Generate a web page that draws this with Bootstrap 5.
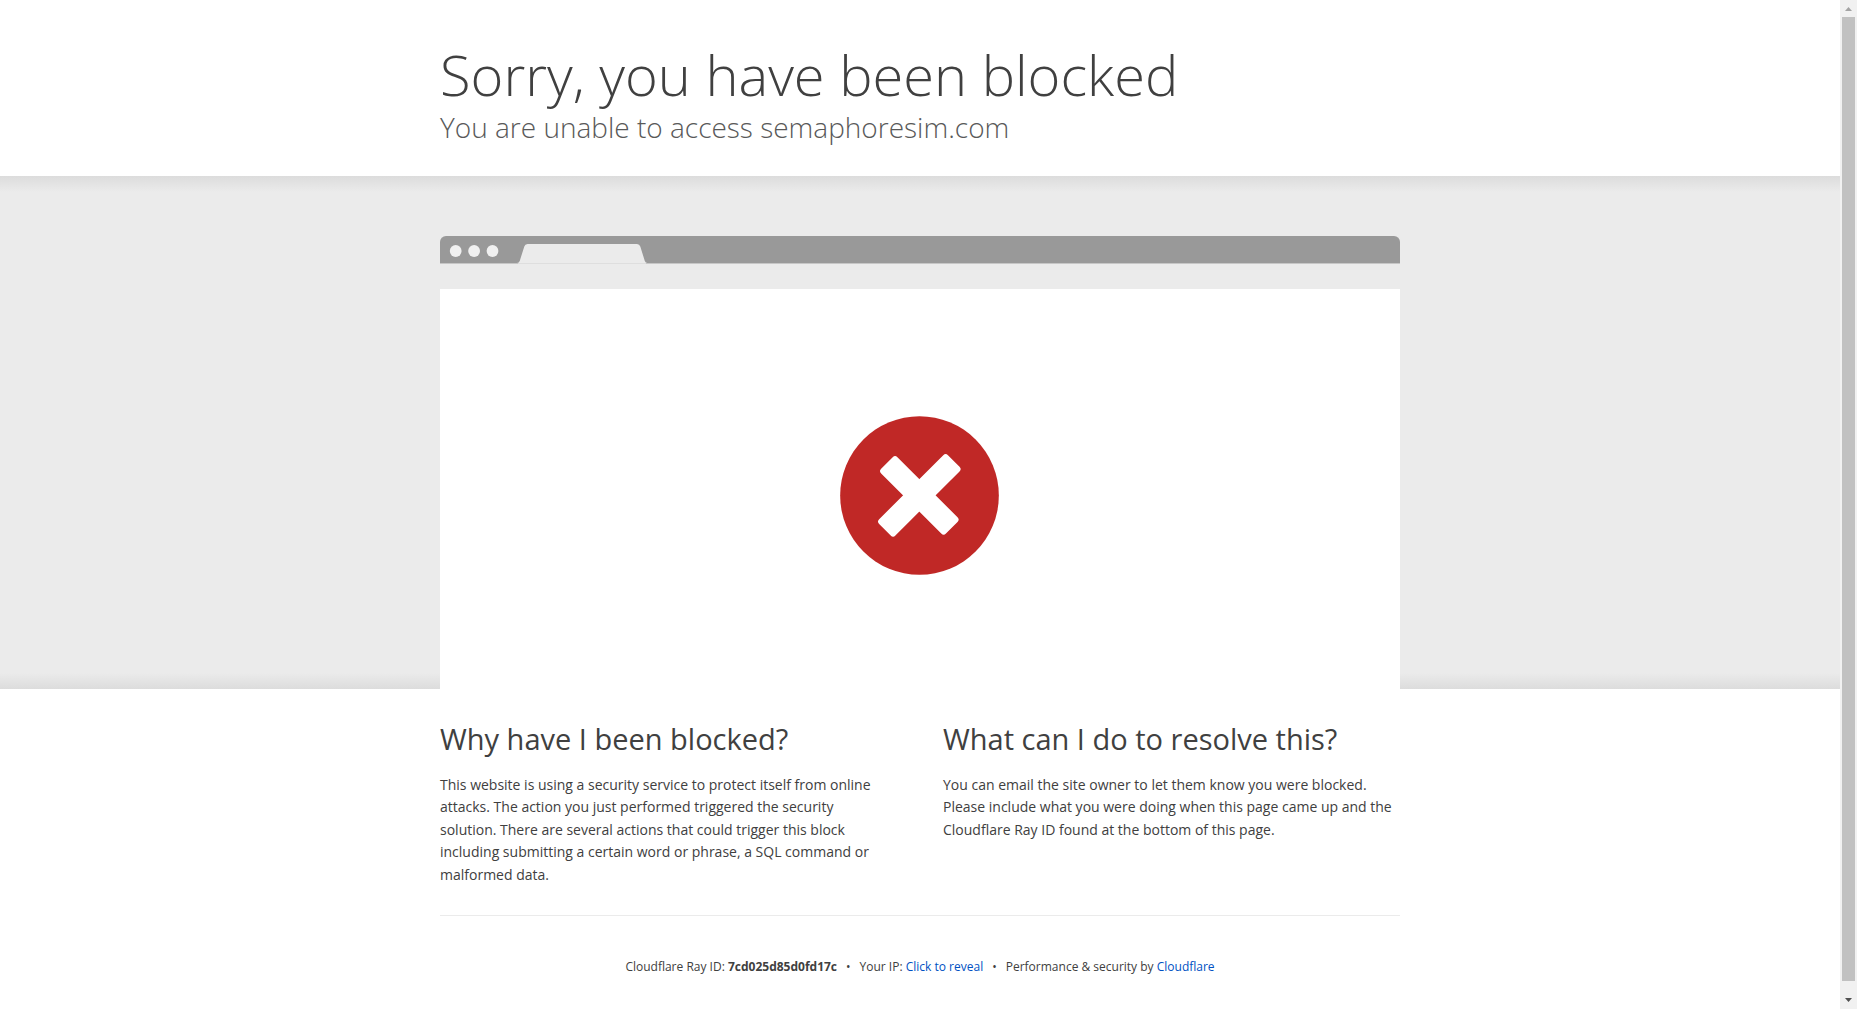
<!DOCTYPE html>
<html lang="en">
<head>
<meta charset="utf-8">
<meta name="viewport" content="width=device-width, initial-scale=1">
<title>Attention Required! | Cloudflare</title>
<link rel="stylesheet" href="https://cdn.jsdelivr.net/npm/bootstrap@5.3.0/dist/css/bootstrap.min.css">
<style>
  body { font-family: "Open Sans", "Noto Sans", sans-serif; font-size: 14px; line-height: 1.6; color: #404040; background: #fff; }
  .wrapper-960 { width: 100%; max-width: 960px; margin: 0 auto; }
  .page-head { padding: 39px 0 31px; }
  .page-head h1 { font-size: 56px; line-height: 70px; font-weight: 300; }
  .page-head h2 { font-size: 28px; line-height: 36px; font-weight: 300; color: #595959; }
  .stage {
    padding-top: 60px;
    background:
      linear-gradient(to bottom, #dcdcdc, #ebebeb) top / 100% 16px no-repeat,
      linear-gradient(to top, #dcdcdc, #ebebeb) bottom / 100% 16px no-repeat,
      #ebebeb;
  }
  .window-bar {
    background: linear-gradient(#c6c6c6, #c6c6c6) bottom / 100% 1px no-repeat, #999;
    border-radius: 6px 6px 0 0;
    margin-bottom: 25px;
  }
  .window-body { height: 400px; padding-top: 12px; background: #fff; }
  .reasons { --bs-gutter-x: 46px; padding: 32px 0 29px; }
  .reasons h2 { font-size: 29px; line-height: 36px; font-weight: 400; margin-bottom: 17px; }
  .page-foot { border-top: 1px solid #ebebeb; padding: 42px 0 32px; font-size: 12px; line-height: 18px; column-gap: 9px; }
  .page-foot a, .page-foot .btn { color: #0051c3; font-size: 12px; line-height: 18px; text-decoration: none; }
  .page-foot strong { font-weight: 700; }
  .scroll-rail { width: 17px; height: 100vh; background: #f1f1f1; }
  .scroll-thumb { background: #c1c1c1; width: 13px; }
</style>
<script src="https://cdn.jsdelivr.net/npm/bootstrap@5.3.0/dist/js/bootstrap.bundle.min.js"></script>
</head>
<body>
<div class="d-flex">
  <div class="flex-grow-1">
    <header class="page-head">
      <div class="wrapper-960">
        <h1 class="mb-0">Sorry, you have been blocked</h1>
        <h2 class="mb-0">You are unable to access semaphoresim.com</h2>
      </div>
    </header>

    <section class="stage">
      <div class="wrapper-960">
        <div class="window-bar">
          <svg class="d-block" width="240" height="28" viewBox="0 0 240 28" aria-hidden="true">
            <g fill="#f0f0f0"><circle cx="15.7" cy="15" r="5.9"/><circle cx="34.1" cy="15" r="5.9"/><circle cx="52.5" cy="15" r="5.9"/></g>
            <path d="M77 27 Q79 27 79.7 25 L84.3 10.5 Q85 8 87.500 8 H197 Q199.500 8 200.300 10.500 L204.800 25 Q205.500 27 207.500 27 Z" fill="#ebebeb"/>
            <rect x="78" y="27" width="128" height="1" fill="#dedede"/>
          </svg>
        </div>
        <div class="window-body d-flex align-items-center justify-content-center">
          <svg width="160" height="159" viewBox="60 48 480 477" role="img" aria-label="Blocked">
            <circle cx="298.500" cy="286.500" r="238" fill="#c02826"/>
            <g fill="#fff" transform="translate(298 286)">
              <rect x="-137.500" y="-34.500" width="275" height="69" rx="10" transform="rotate(45)"/>
              <rect x="-146" y="-34.500" width="292" height="69" rx="10" transform="rotate(-45)"/>
            </g>
          </svg>
        </div>
      </div>
    </section>

    <main class="wrapper-960">
      <div class="row reasons">
        <section class="col-md-6">
          <h2>Why have I been blocked?</h2>
          <p class="mb-0 pe-3">This website is using a security service to protect itself from online attacks. The action you just performed triggered the security solution. There are several actions that could trigger this block including submitting a certain word or phrase, a SQL command or malformed data.</p>
        </section>
        <section class="col-md-6">
          <h2>What can I do to resolve this?</h2>
          <p class="mb-0">You can email the site owner to let them know you were blocked. Please include what you were doing when this page came up and the Cloudflare Ray ID found at the bottom of this page.</p>
        </section>
      </div>
      <footer class="page-foot d-flex flex-wrap justify-content-center">
        <span>Cloudflare Ray ID: <strong>7cd025d85d0fd17c</strong></span>
        <span>&bull;</span>
        <span>Your IP: <button type="button" class="btn btn-link border-0 p-0 align-baseline">Click to reveal</button></span>
        <span>&bull;</span>
        <span>Performance &amp; security by <a href="#">Cloudflare</a></span>
      </footer>
    </main>
  </div>

  <div class="scroll-rail sticky-top flex-shrink-0 d-flex flex-column align-items-center" aria-hidden="true">
    <svg class="flex-shrink-0" width="17" height="17"><path d="M5 11 L8.500 7 L12 11 Z" fill="#a3a3a3"/></svg>
    <div class="scroll-thumb flex-grow-1"></div>
    <svg class="flex-shrink-0" width="17" height="28"><path d="M5 17 H12 L8.500 21 Z" fill="#505050"/></svg>
  </div>
</div>
</body>
</html>
